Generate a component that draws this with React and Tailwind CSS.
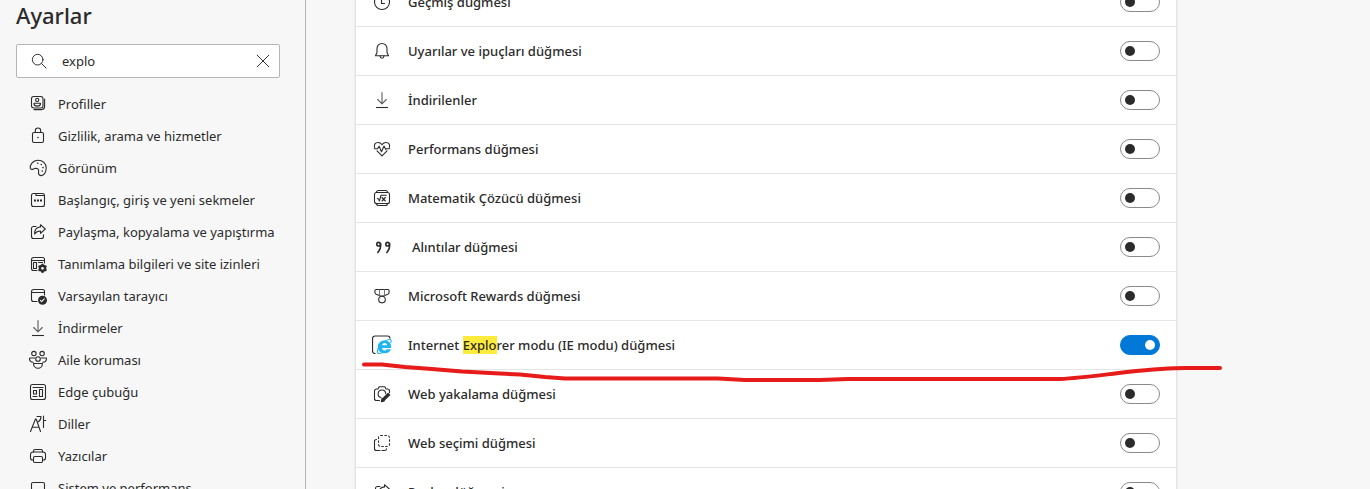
import React, { useState } from 'react';

const Icon = ({ size = 18, children }) => (
    <svg
        width={size}
        height={size}
        viewBox="0 0 18 18"
        fill="none"
        stroke="#2b2b2b"
        strokeWidth="1.1"
        strokeLinecap="round"
        strokeLinejoin="round"
        className="shrink-0 overflow-visible"
        aria-hidden="true"
    >
        {children}
    </svg>
);

const ProfileIcon = () => (
    <Icon>
        <rect x="2.5" y="1.5" width="11.5" height="11.5" rx="2.2" />
        <path d="M15.6 4v7.6a3 3 0 0 1-3 3H5" />
        <circle cx="8.2" cy="4.9" r="1.6" />
        <path d="M5 8.3h6.5v.5c0 1.6-1.3 2.3-3.2 2.3S5 10.400 5 8.800z" />
    </Icon>
);

const LockIcon = () => (
    <Icon>
        <rect x="3.500" y="5.500" width="11" height="10" rx="1.500" />
        <path d="M6.300 5.500V3.700a2.700 2.700 0 0 1 5.400 0v1.800" />
        <circle cx="9" cy="10.500" r=".8" fill="#2b2b2b" stroke="none" />
    </Icon>
);

const PaletteIcon = () => (
    <Icon>
        <path d="M1.400 9.500C.4 6 3.800 1.200 9 1.200c4.800 0 8.200 3.400 8.200 7.800 0 4.200-2.200 7.600-5 7.600-1.700 0-2.700-1.200-2.700-2.800 0-1 .3-1.600.1-2.600-.3-1.500-2.400-2.200-4-1.700-1.300.4-3.200 2-4.200 0z" />
        <g fill="#2b2b2b" stroke="none">
            <circle cx="8.800" cy="4.300" r=".8" />
            <circle cx="12.300" cy="5.500" r=".8" />
            <circle cx="14" cy="8.600" r=".8" />
            <circle cx="13.200" cy="12" r=".8" />
        </g>
    </Icon>
);

const TabsIcon = () => (
    <Icon>
        <rect x="2.500" y="2.500" width="13" height="13" rx="2" />
        <path d="M7 2.500V4.500h8.500" />
        <path d="M5 9.500h2M8 9.500h2M11 9.500h2" strokeWidth="1.800" strokeLinecap="butt" />
    </Icon>
);

const ShareIcon = () => (
    <Icon>
        <path d="M7 3.500H4.500a2 2 0 0 0-2 2v8a2 2 0 0 0 2 2h8a2 2 0 0 0 2-2v-1.800" />
        <path d="M11.500 1.700l4.800 4.300-4.800 4.300V8C8.500 7.900 7 9 5.600 11c0-4 2.400-6.800 5.900-7.100z" />
    </Icon>
);

const SitePermissionsIcon = () => (
    <Icon>
        <path d="M8 15.500H4.500a2 2 0 0 1-2-2v-9a2 2 0 0 1 2-2h9a2 2 0 0 1 2 2V8" />
        <path d="M2.500 5.500h13" />
        <rect x="4.500" y="7.500" width="3" height="6" />
        <path d="M9.500 7.500h4" />
        <circle cx="13.500" cy="13.300" r="2.600" strokeWidth="2.400" />
        <path
            d="M13.500 8.700v2M13.500 15.900v2M9.500 11l1.700 1M15.800 14.600l1.700 1M9.500 15.600l1.700-1M15.800 12l1.700-1"
            strokeWidth="2"
            strokeLinecap="butt"
        />
    </Icon>
);

const DefaultBrowserIcon = () => (
    <Icon>
        <path d="M8 14.500H4.500a2 2 0 0 1-2-2v-8a2 2 0 0 1 2-2h9a2 2 0 0 1 2 2V8M2.500 5.500h13" />
        <circle cx="13.500" cy="13.200" r="4.500" fill="#2b2b2b" stroke="none" />
        <path d="M11.400 13.300l1.300 1.300 2.600-2.700" stroke="#f7f7f7" />
    </Icon>
);

const DownloadIcon = () => (
    <Icon>
        <path d="M9 1.500v11M4.700 8.500L9 12.800l4.300-4.300" stroke="#5c5c5c" />
        <path d="M3 16.500h12" strokeLinecap="butt" />
    </Icon>
);

const FamilyIcon = () => (
    <Icon>
        <circle cx="4.900" cy="2.600" r="2.200" />
        <circle cx="13.100" cy="2.600" r="2.200" />
        <circle cx="9" cy="8" r="2.300" />
        <path d="M4.500 12.500h9c0 2.700-2 4.800-4.500 4.800s-4.500-2.100-4.500-4.800z" />
        <path d="M5.500 7H.6c-.5 2.600 1.200 4.300 3.600 4.300M12.500 7h4.900c.5 2.600-1.200 4.300-3.600 4.300" />
    </Icon>
);

const SidebarIcon = () => (
    <Icon>
        <rect x="1.500" y="1.500" width="15" height="15" rx="2" />
        <path d="M4 4.500h10M4 13.500h4" />
        <rect x="4.500" y="7.500" width="3" height="3.500" />
        <rect x="10.500" y="6.500" width="3" height="7" />
    </Icon>
);

const LanguageIcon = () => (
    <Icon>
        <path d="M1.500 16.500L6.500 4h.7l4.300 12.500M3.200 12.300h6.900" />
        <path d="M8 1.500h4c.1 2.300-.9 4.200-2.800 5.200M14.500 1v11.500M14.500 5.500h2.200" />
    </Icon>
);

const PrinterIcon = () => (
    <Icon>
        <path d="M4.500 13H3.500a2 2 0 0 1-2-2V7.500a2.500 2.500 0 0 1 2.500-2.500h10a2.500 2.500 0 0 1 2.500 2.500V11a2 2 0 0 1-2 2h-1" />
        <path d="M4.500 5V4a1.500 1.500 0 0 1 1.500-1.500h6A1.500 1.500 0 0 1 13.500 4v1" />
        <rect x="4.500" y="9.500" width="9" height="6" rx="1.200" />
    </Icon>
);

const SystemIcon = () => (
    <Icon>
        <rect x="2.500" y="3.500" width="13" height="9" rx="1.500" />
        <path d="M6 15.500h6M7.500 12.500v3M10.500 12.500v3" />
    </Icon>
);

const HistoryIcon = () => (
    <Icon>
        <circle cx="9" cy="9" r="7.500" />
        <path d="M8.500 4.500v6h3.500" strokeLinecap="butt" />
    </Icon>
);

const BellIcon = () => (
    <Icon>
        <path d="M9 1.500a5 5 0 0 0-5 5v4l-1.500 3.200h13L14 10.500v-4a5 5 0 0 0-5-5z" />
        <path d="M7 14c.2 1.600 1 2.200 2 2.200s1.800-.6 2-2.200" />
    </Icon>
);

const PerformanceIcon = () => (
    <Icon>
        <path d="M1.700 7.500C.5 4.500 2.500 2.500 5 2.500c1.700 0 3 .9 4 2.200 1-1.300 2.300-2.200 4-2.200 2.500 0 4.500 2 3.300 5M4 10.800l5 5 5-5" />
        <path d="M1.200 8.700h3.300l1.600-2.500 2.400 5.500L11 6l1.800 3.400.8-.7h3.200" />
    </Icon>
);

const MathIcon = () => (
    <Icon>
        <rect x="1.500" y="3.500" width="15" height="11" rx="2" />
        <path d="M3.500 3.500c0-1.300.7-2 2-2h7c1.300 0 2 .7 2 2M3.500 14.500c0 1.300.7 2 2 2h7c1.300 0 2-.7 2-2" />
        <path d="M4.300 9.500l1 .2 1.200 2.200L8 6.200h5.300M9 8.500l3.300 3.500M12.300 8.500L9 12" />
    </Icon>
);

const QuoteIcon = () => (
    <Icon>
        <g strokeWidth="1.600">
            <circle cx="5.600" cy="6.200" r="1.800" />
            <path d="M7.600 5.700c.4 3.300-.6 6.300-2.800 8.800" />
            <circle cx="14.600" cy="6.200" r="1.800" />
            <path d="M16.600 5.700c.4 3.300-.6 6.300-2.800 8.800" />
        </g>
    </Icon>
);

const RewardsIcon = () => (
    <Icon>
        <path d="M3.200 2.500h11.600c.9 0 1.300.4 1.300 1.200v1.600c0 1-.5 1.600-1.300 2L10.500 9h-3L3.200 7.300c-.8-.4-1.300-1-1.300-2V3.700c0-.8.400-1.200 1.300-1.200z" />
        <path d="M6.500 2.700v5.500M11.500 2.700v5.500" stroke="#777" />
        <circle cx="9" cy="12.600" r="3.300" />
    </Icon>
);

const IeIcon = () => (
    <svg width="20" height="20" viewBox="0 0 20 20" fill="none" className="shrink-0" aria-hidden="true">
        <path d="M3.500 18.500H3A2.500 2.500 0 0 1 .5 16V3.500A2.500 2.500 0 0 1 3 1h12.500A2.500 2.500 0 0 1 18 3.500" stroke="#2b2b2b" strokeWidth="1.200" />
        <path
            fillRule="evenodd"
            fill="#1fb5f2"
            d="M19.200 13c.3-4.700-2.200-7.500-6.600-7.500-4 0-6.700 2.600-6.700 6.400 0 3.800 2.700 6.300 6.700 6.300 3.200 0 5.400-1.400 6.300-4h-4.200c-.5.9-1.100 1.200-2.100 1.200-1.600 0-2.500-.9-2.600-2.400zM10.100 10.300c.2-1.400 1.100-2.200 2.500-2.200s2.300.8 2.400 2.200z"
        />
        <path
            d="M18.600 8c.9-2 .8-3.300-.4-3.500-2.600-.4-7.600 2.300-10.500 6.300-2.400 3.400-3 6.600-1.500 7.500 1 .5 2.700.1 4.400-.9"
            stroke="#1fb5f2"
            strokeWidth="1.100"
        />
    </svg>
);

const CaptureIcon = () => (
    <Icon>
        <path d="M6.500 15.500h-3a2 2 0 0 1-2-2V6a2 2 0 0 1 2-2H5l1.200-2.200h5.600L13 4h1.500a2 2 0 0 1 2 2v1.500" />
        <path d="M8 12.500a3.800 3.800 0 1 1 4.700-4" />
        <path d="M16.300 8.700l-6.300 6.200" strokeWidth="3.400" strokeLinecap="butt" />
        <path d="M9 13.600l2.300 2.300-3 .8z" fill="#2b2b2b" />
    </Icon>
);

const SelectIcon = () => (
    <Icon>
        <rect x="5.500" y="1.500" width="11" height="11" rx="2" strokeDasharray="2.400 1.500" strokeLinecap="butt" />
        <path d="M3.500 5.500c-1.300 0-2 .7-2 2v7a2 2 0 0 0 2 2H7M9 16.500h2.500c1.300 0 2-.6 2-1.800" />
    </Icon>
);

const menuItems = [
    { label: 'Profiller', icon: ProfileIcon },
    { label: 'Gizlilik, arama ve hizmetler', icon: LockIcon },
    { label: 'Görünüm', icon: PaletteIcon },
    { label: 'Başlangıç, giriş ve yeni sekmeler', icon: TabsIcon },
    { label: 'Paylaşma, kopyalama ve yapıştırma', icon: ShareIcon },
    { label: 'Tanımlama bilgileri ve site izinleri', icon: SitePermissionsIcon },
    { label: 'Varsayılan tarayıcı', icon: DefaultBrowserIcon },
    { label: 'İndirmeler', icon: DownloadIcon },
    { label: 'Aile koruması', icon: FamilyIcon },
    { label: 'Edge çubuğu', icon: SidebarIcon },
    { label: 'Diller', icon: LanguageIcon },
    { label: 'Yazıcılar', icon: PrinterIcon },
    { label: 'Sistem ve performans', icon: SystemIcon },
];

const toolbarButtons = [
    { id: 'history', label: 'Geçmiş düğmesi', icon: HistoryIcon },
    { id: 'alerts', label: 'Uyarılar ve ipuçları düğmesi', icon: BellIcon },
    { id: 'downloads', label: 'İndirilenler', icon: DownloadIcon },
    { id: 'performance', label: 'Performans düğmesi', icon: PerformanceIcon },
    { id: 'math', label: 'Matematik Çözücü düğmesi', icon: MathIcon },
    { id: 'quotes', label: 'Alıntılar düğmesi', icon: QuoteIcon },
    { id: 'rewards', label: 'Microsoft Rewards düğmesi', icon: RewardsIcon },
    { id: 'ie', label: 'Internet Explorer modu (IE modu) düğmesi', icon: IeIcon, marked: true },
    { id: 'capture', label: 'Web yakalama düğmesi', icon: CaptureIcon },
    { id: 'select', label: 'Web seçimi düğmesi', icon: SelectIcon },
    { id: 'share', label: 'Paylaş düğmesi', icon: ShareIcon },
];

// Wraps the first match of the search text in a yellow mark
const Highlight = ({ text, query }) => {
    const start = query ? text.toLowerCase().indexOf(query.toLowerCase()) : -1;
    if (start < 0) return text;
    const end = start + query.length;
    return (
        <>
            {text.slice(0, start)}
            <mark className="bg-[#ffeb3b] text-inherit">{text.slice(start, end)}</mark>
            {text.slice(end)}
        </>
    );
};

const RedUnderline = () => (
    <svg
        width="866"
        height="28"
        viewBox="0 0 866 28"
        fill="none"
        className="pointer-events-none absolute top-9 left-0 z-10"
        aria-hidden="true"
    >
        <path
            d="M8 7.500H26L49 10L76 12L106 14.500L134 16L164 17.500L189 20L209 21.500H362L389 23H464L492 22H704C726 21 745 18 771 15C800 12 815 11 830 11H864"
            stroke="#e81b1b"
            strokeWidth="4"
            strokeLinecap="round"
            strokeLinejoin="round"
        />
    </svg>
);

const ToolbarRow = ({ item, query, checked, onChange }) => {
    const RowIcon = item.icon;
    return (
        <li className="relative flex h-[49px] items-center border-b border-[#e5e5e5] px-4">
            <label htmlFor={item.id} className="flex min-w-0 flex-1 items-center">
                <span className="flex w-5 shrink-0 justify-center">
                    <RowIcon />
                </span>
                <span className={item.id === 'quotes' ? 'pt-0.5 pl-5' : 'pt-0.5 pl-4'}>
                    <Highlight text={item.label} query={query} />
                </span>
            </label>
            <input
                id={item.id}
                type="checkbox"
                role="switch"
                checked={checked}
                onChange={onChange}
                className="flex h-5 w-10 shrink-0 appearance-none items-center rounded-full border border-[#8a8a8a] bg-white px-1 before:size-[10px] before:rounded-full before:bg-[#2b2b2b] checked:justify-end checked:border-[#0078d7] checked:bg-[#0078d7] checked:before:bg-white"
            />
            {item.marked && <RedUnderline />}
        </li>
    );
};

const App = () => {
    const [query, setQuery] = useState('explo');
    const [enabled, setEnabled] = useState({ ie: true });

    const toggle = (id) => setEnabled({ ...enabled, [id]: !enabled[id] });

    return (
        <div className="flex h-screen overflow-hidden bg-[#f7f7f7] font-['Segoe_UI','Noto_Sans',sans-serif] text-[13px] text-[#2b2b2b]">
            <aside className="w-[306px] shrink-0 overflow-hidden border-r border-[#b3b3b3] pl-4">
                <h1 className="text-[22px] leading-[30px] font-medium">Ayarlar</h1>
                <div className="mt-[14px] mr-[25px] flex h-[34px] items-center rounded-xs border border-[#b5b5b5] bg-white pr-2 pl-[14px]">
                    <Icon size={16}>
                        <circle cx="7.500" cy="7.500" r="6" />
                        <path d="M12 12l5 5" />
                    </Icon>
                    <input
                        type="text"
                        aria-label="Ayarlarda ara"
                        value={query}
                        onChange={(e) => setQuery(e.target.value)}
                        className="ml-[15px] min-w-0 flex-1 bg-transparent pt-0.5 outline-none"
                    />
                    <button type="button" aria-label="Temizle" onClick={() => setQuery('')}>
                        <Icon size={16}>
                            <path d="M2.500 2.500l13 13M15.500 2.500l-13 13" />
                        </Icon>
                    </button>
                </div>
                <nav className="mt-[10px]">
                    {menuItems.map(({ label, icon: MenuIcon }) => (
                        <a key={label} href="#" className="flex h-8 items-center gap-[11px] pl-[13px] whitespace-nowrap">
                            <MenuIcon />
                            <span className="pt-0.5">{label}</span>
                        </a>
                    ))}
                </nav>
            </aside>
            <main className="min-w-0 flex-1 overflow-hidden pl-[50px]">
                {/* list is scrolled half a row down */}
                <ul className="-mt-[22px] w-full max-w-[820px] bg-white font-medium shadow-[0_0_3px_rgba(0,0,0,0.2)]">
                    {toolbarButtons.map((item) => (
                        <ToolbarRow
                            key={item.id}
                            item={item}
                            query={query}
                            checked={!!enabled[item.id]}
                            onChange={() => toggle(item.id)}
                        />
                    ))}
                </ul>
            </main>
        </div>
    );
};

export default App;
